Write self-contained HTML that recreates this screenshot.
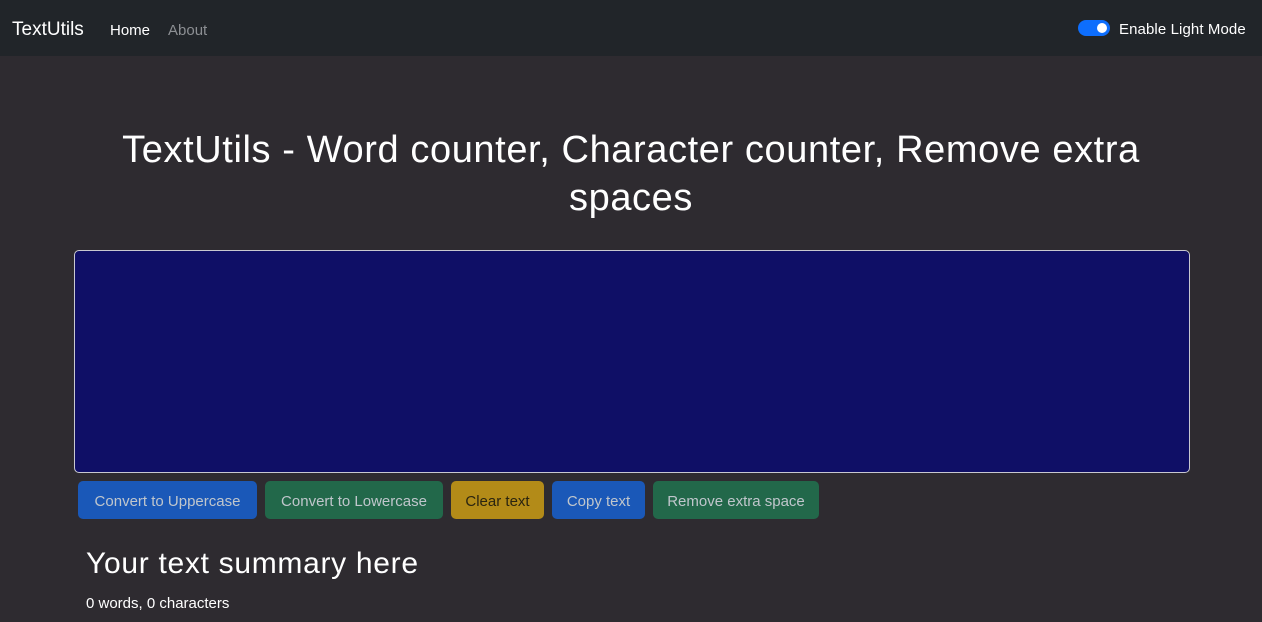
<!DOCTYPE html>
<html><head><style>
body{margin:0;background:#2e2b30;font-family:"Liberation Sans",sans-serif;color:#fff;width:1262px;height:622px;overflow:hidden;position:relative}
nav{position:absolute;left:0;top:0;width:1262px;height:56px;background:#212529}
.a{position:absolute;white-space:nowrap}
.btn{position:absolute;top:481px;height:38px;border-radius:5px;font-size:15px;line-height:42px;text-align:center;color:#c0c6cc}
</style></head><body>
<nav>
<div class="a" style="left:12px;top:19px;font-size:19px">TextUtils</div>
<div class="a" style="left:110px;top:22px;font-size:15px">Home</div>
<div class="a" style="left:168px;top:22px;font-size:15px;color:#8c8f93">About</div>
<div class="a" style="left:1078px;top:20px;width:32px;height:16px;border-radius:8px;background:#0d6efd"><div style="position:absolute;right:3px;top:3px;width:10px;height:10px;border-radius:50%;background:#fff"></div></div>
<div class="a" style="left:1119px;top:21px;font-size:15px;letter-spacing:0.1px">Enable Light Mode</div>
</nav>
<div class="a" style="left:0;width:1262px;top:126px;text-align:center;font-size:38px;line-height:48px;white-space:normal;letter-spacing:0.6px"><div style="width:1080px;margin:0 auto">TextUtils - Word counter, Character counter, Remove extra spaces</div></div>
<div class="a" style="left:74px;top:250px;width:1114px;height:221px;background:#0f0f66;border:1px solid #c8c8d0;border-radius:5px"></div>
<div class="btn" style="left:78px;width:179px;background:#1a58b8">Convert to Uppercase</div>
<div class="btn" style="left:265px;width:178px;background:#22684a">Convert to Lowercase</div>
<div class="btn" style="left:451px;width:93px;background:#b38b18;color:#2a2410">Clear text</div>
<div class="btn" style="left:552px;width:93px;background:#1a58b8">Copy text</div>
<div class="btn" style="left:653px;width:166px;background:#22684a">Remove extra space</div>
<div class="a" style="left:86px;top:547px;font-size:30px;letter-spacing:0.7px">Your text summary here</div>
<div class="a" style="left:86px;top:595px;font-size:15px">0 words, 0 characters</div>
</body></html>
